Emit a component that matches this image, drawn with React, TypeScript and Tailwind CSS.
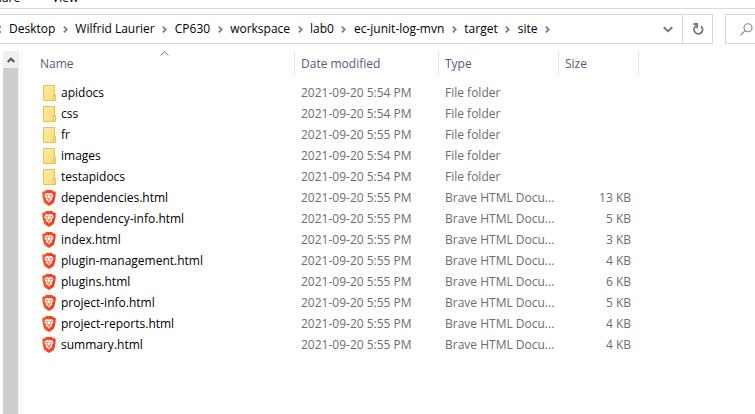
type Entry = {
  name: string;
  modified: string;
  kind: 'folder' | 'html';
  size?: string;
};

const path = ['Desktop', 'Wilfrid Laurier', 'CP630', 'workspace', 'lab0', 'ec-junit-log-mvn', 'target', 'site'];

const entries: Entry[] = [
  { name: 'apidocs', modified: '2021-09-20 5:54 PM', kind: 'folder' },
  { name: 'css', modified: '2021-09-20 5:54 PM', kind: 'folder' },
  { name: 'fr', modified: '2021-09-20 5:55 PM', kind: 'folder' },
  { name: 'images', modified: '2021-09-20 5:54 PM', kind: 'folder' },
  { name: 'testapidocs', modified: '2021-09-20 5:54 PM', kind: 'folder' },
  { name: 'dependencies.html', modified: '2021-09-20 5:55 PM', kind: 'html', size: '13 KB' },
  { name: 'dependency-info.html', modified: '2021-09-20 5:55 PM', kind: 'html', size: '5 KB' },
  { name: 'index.html', modified: '2021-09-20 5:55 PM', kind: 'html', size: '3 KB' },
  { name: 'plugin-management.html', modified: '2021-09-20 5:55 PM', kind: 'html', size: '4 KB' },
  { name: 'plugins.html', modified: '2021-09-20 5:55 PM', kind: 'html', size: '6 KB' },
  { name: 'project-info.html', modified: '2021-09-20 5:55 PM', kind: 'html', size: '5 KB' },
  { name: 'project-reports.html', modified: '2021-09-20 5:55 PM', kind: 'html', size: '4 KB' },
  { name: 'summary.html', modified: '2021-09-20 5:55 PM', kind: 'html', size: '4 KB' },
];

function CrumbChevron() {
  return (
    <svg width="5" height="7" viewBox="0 0 5 7" fill="none" stroke="#7a7a7a" strokeWidth="1.7" aria-hidden="true">
      <path d="M0.8 0.7 3.7 3.5 0.8 6.3" />
    </svg>
  );
}

function FolderIcon() {
  return (
    <svg width="14" height="16" viewBox="-1 0 14 16" aria-hidden="true">
      <defs>
        <linearGradient id="folder" x1="0" y1="0" x2="1" y2="1">
          <stop offset="0" stopColor="#ffeaa4" />
          <stop offset="1" stopColor="#fbdc7c" />
        </linearGradient>
      </defs>
      <path d="M0.5 0.5h11v9h1v6H0.5z" fill="url(#folder)" stroke="#e8c54a" />
      <path d="M10.5 15.5v-6h2v6z" fill="#fde796" stroke="#e8c54a" />
    </svg>
  );
}

function BraveIcon() {
  return (
    <svg width="14" height="16" viewBox="0 0 14 16" aria-hidden="true">
      <defs>
        <linearGradient id="brave" x1="0" y1="0" x2="1" y2="0">
          <stop offset="0" stopColor="#ff5a1f" />
          <stop offset="1" stopColor="#f9301c" />
        </linearGradient>
      </defs>
      <path
        d="M4 0h6l1.3 1.4 1.5-.1 1.1 1.8-.5 1.4.3 1-1.5 6.2c-.2.8-.7 1.3-1.3 1.8L7.6 15.8H6.4L3.1 13.5c-.6-.5-1.1-1-1.3-1.800L.3 5.500l.3-1L.1 3.100l1.100-1.800 1.500.1z"
        fill="url(#brave)"
      />
      <path
        d="M4.300 3 7 3.500 9.700 3l1.900 2.200-.5 1.600-1.400 1.700.4 1.400-2 1.300L7 12.800l-1.100-1.600-2-1.300.4-1.400-1.400-1.700-.5-1.600z"
        fill="#fff"
      />
      <path
        d="M3.600 5.400 6 6M10.400 5.400 8 6M7 4.600v1M5.400 7.200l.8 1.700L7 9.300l.8-.4.8-1.700M5.800 10.400 7 9.800l1.200.6"
        fill="none"
        stroke="#fb4a20"
        strokeWidth="0.9"
      />
    </svg>
  );
}

function HeaderCell({ label, sorted, first }: { label: string; sorted?: boolean; first?: boolean }) {
  return (
    <th scope="col" className="relative h-[25px] border-r border-[#e5e5e5] p-0 font-normal">
      {sorted && (
        <svg
          className="absolute top-0 left-1/2 ml-0.5"
          width="9"
          height="5"
          viewBox="0 0 9 5"
          fill="none"
          stroke="#707070"
          aria-hidden="true"
        >
          <path d="M0.700 4.500 4.500 0.700 8.300 4.500" />
        </svg>
      )}
      <button
        type="button"
        className={`block h-[25px] w-full text-left text-[#4c607a] ${first ? 'pl-[18px]' : 'pl-1.5'}`}
      >
        {label}
      </button>
    </th>
  );
}

export default function App() {
  return (
    <div className="flex min-h-screen flex-col bg-white font-['Open_Sans','Noto_Sans',sans-serif] text-[12px] leading-4 text-black">
      <nav aria-label="Ribbon" className="flex h-[9px] items-end overflow-hidden border-b border-[#dadbdc] pb-0.5">
        <button type="button" className="-ml-3 w-16 text-left">Share</button>
        <button type="button">View</button>
      </nav>

      <div className="mt-[5px] flex h-[30px] gap-3">
        <div className="flex min-w-0 flex-1 border border-l-0 border-[#d9d9d9]">
          <nav aria-label="Address" className="flex min-w-0 flex-1 items-center overflow-hidden">
            <span className="w-[9px] shrink-0">
              <svg width="2" height="7" viewBox="0 0 2 7" fill="#8a8a8a" aria-hidden="true">
                <path d="M0 0h1v2H0zM0 5h1v2H0z" />
              </svg>
            </span>
            {path.map((part) => (
              <span key={part} className="flex shrink-0 items-center">
                <button type="button" className="whitespace-nowrap">{part}</button>
                <span className="flex w-5 justify-center">
                  <CrumbChevron />
                </span>
              </span>
            ))}
          </nav>
          <button type="button" aria-label="Previous locations" className="flex w-[29px] shrink-0 items-center justify-center">
            <svg width="10" height="7" viewBox="0 0 10 7" fill="none" stroke="#777" strokeWidth="2" aria-hidden="true">
              <path d="M0.800 1.200 5 5.200 9.200 1.200" />
            </svg>
          </button>
          <button
            type="button"
            aria-label="Refresh"
            className="flex w-[30px] shrink-0 items-center justify-center border-l border-[#d9d9d9]"
          >
            <svg width="12" height="12" viewBox="0 0 12 12" fill="none" stroke="#777" strokeWidth="1.800" aria-hidden="true">
              <path d="M9 3.200A4.300 4.300 0 1 1 4.600 2.600" />
              <path d="M1.500 1H5.200V5.400" />
            </svg>
          </button>
        </div>
        <button
          type="button"
          aria-label="Search"
          className="flex w-[30px] shrink-0 items-center border border-r-0 border-[#d9d9d9] pl-3.5"
        >
          <svg width="13" height="13" viewBox="0 0 13 13" fill="none" stroke="#85858f" strokeWidth="1.100" aria-hidden="true">
            <circle cx="8" cy="4.800" r="4" />
            <path d="M5.100 7.700 0.600 12.300" />
          </svg>
        </button>
      </div>

      <div className="mt-[7px] flex flex-1">
        <div className="ml-[3px] flex w-4 flex-col bg-[#f0f0f0]">
          <button type="button" aria-label="Scroll up" className="flex h-[17px] items-center justify-center">
            <svg width="8" height="6" viewBox="0 0 8 6" fill="none" stroke="#555" strokeWidth="2" aria-hidden="true">
              <path d="M0.700 5 4 1.700 7.300 5" />
            </svg>
          </button>
          <div className="mr-px flex-1 bg-[#cdcdcd]" />
        </div>
        <main className="ml-0.5 min-w-0 flex-1 border-l border-[#f2f2f2]">
          <table className="w-[617px] table-fixed border-separate border-spacing-0">
            <colgroup>
              <col className="w-[273px]" />
              <col className="w-36" />
              <col className="w-[120px]" />
              <col className="w-20" />
            </colgroup>
            <thead>
              <tr>
                <HeaderCell label="Name" sorted first />
                <HeaderCell label="Date modified" />
                <HeaderCell label="Type" />
                <HeaderCell label="Size" />
              </tr>
            </thead>
            <tbody className="text-[#6d6d6d] before:block before:h-1.5 before:content-['']">
              {entries.map((entry) => (
                <tr key={entry.name} className="h-[21px] whitespace-nowrap">
                  <td className="p-0 pl-5 text-black">
                    <span className="flex items-center gap-[5px]">
                      {entry.kind === 'folder' ? <FolderIcon /> : <BraveIcon />}
                      {entry.name}
                    </span>
                  </td>
                  <td className="p-0 pl-1.5">{entry.modified}</td>
                  <td className="p-0 pl-1.5">{entry.kind === 'folder' ? 'File folder' : 'Brave HTML Docu...'}</td>
                  <td className="p-0 pr-2 text-right">{entry.size}</td>
                </tr>
              ))}
            </tbody>
          </table>
        </main>
      </div>
    </div>
  );
}
